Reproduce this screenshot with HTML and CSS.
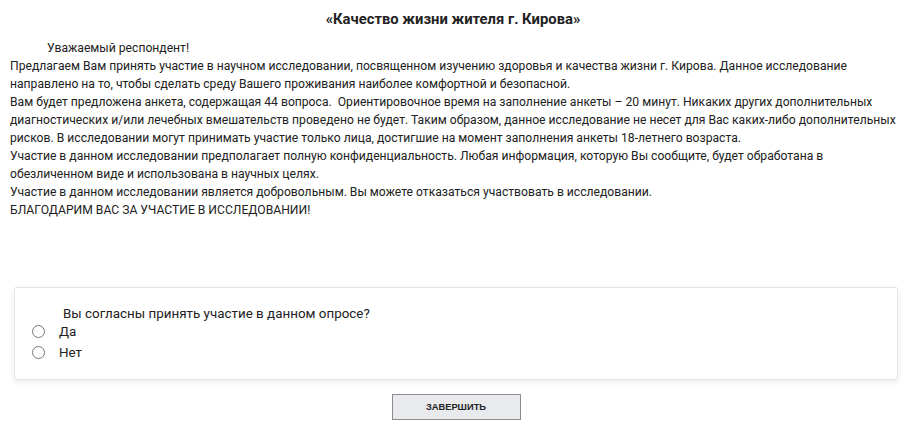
FILE: index.html
```html
<html>
  <head>
    <title>Качество жизни жителя г. Кирова</title>
    <link rel="stylesheet" href="styles.css">
  </head>
  <body>
    <h1 class="title">«Качество жизни жителя г. Кирова»</h1>

    <!-- Intro text -->
    <div class="intro">
      <p class="greeting">Уважаемый респондент!</p>
      <p>Предлагаем Вам принять участие в научном исследовании, посвященном изучению здоровья и качества жизни г. Кирова. Данное исследование направлено на то, чтобы сделать среду Вашего проживания наиболее комфортной и безопасной.</p>
      <p>Вам будет предложена анкета, содержащая 44 вопроса.&nbsp; Ориентировочное время на заполнение анкеты – 20 минут. Никаких других дополнительных диагностических и/или лечебных вмешательств проведено не будет. Таким образом, данное исследование не несет для Вас каких-либо дополнительных рисков. В исследовании могут принимать участие только лица, достигшие на момент заполнения анкеты 18-летнего возраста.</p>
      <p>Участие в данном исследовании предполагает полную конфиденциальность. Любая информация, которую Вы сообщите, будет обработана в обезличенном виде и использована в научных целях.</p>
      <p>Участие в данном исследовании является добровольным. Вы можете отказаться участвовать в исследовании.</p>
      <p>БЛАГОДАРИМ ВАС ЗА УЧАСТИЕ В ИССЛЕДОВАНИИ!</p>
    </div>

    <!-- Question card -->
    <form class="card">
      <div class="question">Вы согласны принять участие в данном опросе?</div>
      <label class="option"><input type="radio" name="agree" value="yes"><span>Да</span></label>
      <label class="option"><input type="radio" name="agree" value="no"><span>Нет</span></label>
    </form>

    <div class="actions">
      <button type="button" class="finish">ЗАВЕРШИТЬ</button>
    </div>
  </body>
</html>
```

FILE: styles.css
```css
body {
  background-color: #ffffff;
  color: #212121;
  font-family: Roboto, "Liberation Sans", sans-serif;
  margin: 0;
  padding: 0 10px;
  overflow: hidden;
}
.title {
  font-size: 14.8px;
  font-weight: bold;
  color: #222222;
  text-align: center;
  margin: 10px 0 0;
  line-height: 18px;
}
.intro {
  margin-top: 11px;
  font-size: 12.15px;
  line-height: 18px;
}
.intro p {
  margin: 0;
}
.greeting {
  padding-left: 37px;
}
.card {
  margin: 68px -2px 0 4px;
  background-color: #ffffff;
  border: 1px solid #e4e6e8;
  border-radius: 3px;
  box-shadow: 0 2px 6px rgba(0, 0, 0, 0.08);
  padding: 17px 16px 16px;
  font-size: 13.4px;
}
.question {
  padding-left: 32px;
  line-height: 17px;
  margin-bottom: -1px;
}
.option {
  display: flex;
  align-items: center;
  height: 21px;
}
.option input {
  margin: 0 14px 0 1px;
  width: 13px;
  height: 13px;
}
.actions {
  display: flex;
  justify-content: center;
  margin: 14px 0 0 6px;
}
.finish {
  width: 129px;
  height: 26px;
  background-color: #e8eaed;
  border: 1px solid #8c8c8c;
  font-family: "Liberation Sans", Arial, sans-serif;
  font-size: 9.3px;
  font-weight: bold;
  color: #222222;
  cursor: pointer;
}
```
